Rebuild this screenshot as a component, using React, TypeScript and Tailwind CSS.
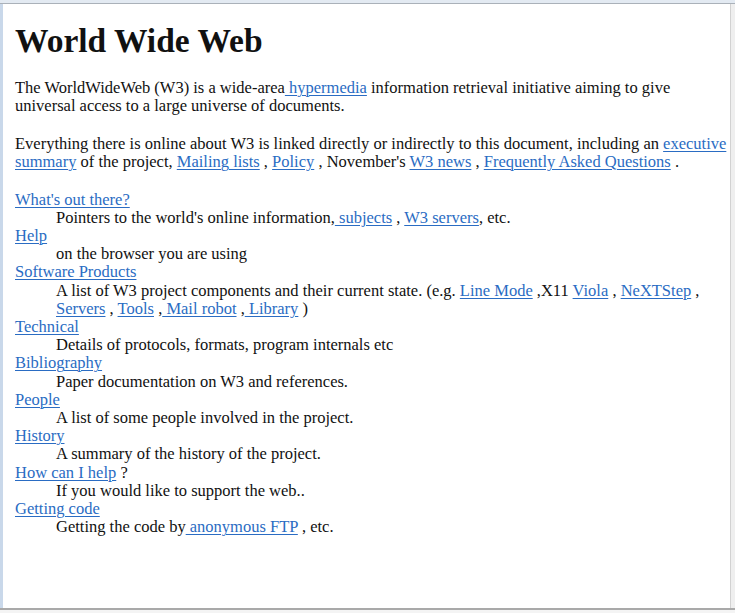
const link = "text-[#2a6cc3] underline decoration-1 underline-offset-[2px]";

function A({ children }: { children: React.ReactNode }) {
  return <a href="#" className={link}>{children}</a>;
}

const entries: { term: React.ReactNode; desc: React.ReactNode }[] = [
  {
    term: <A>What's out there?</A>,
    desc: (
      <>
        Pointers to the world's online information,<A> subjects</A> , <A>W3 servers</A>, etc.
      </>
    ),
  },
  { term: <A>Help</A>, desc: "on the browser you are using" },
  {
    term: <A>Software Products</A>,
    desc: (
      <>
        A list of W3 project components and their current state. (e.g. <A>Line Mode</A> ,X11{" "}
        <A>Viola</A> , <A>NeXTStep</A> , <A>Servers</A> , <A>Tools</A> ,<A> Mail robot</A> ,
        <A> Library</A> )
      </>
    ),
  },
  { term: <A>Technical</A>, desc: "Details of protocols, formats, program internals etc" },
  { term: <A>Bibliography</A>, desc: "Paper documentation on W3 and references." },
  { term: <A>People</A>, desc: "A list of some people involved in the project." },
  { term: <A>History</A>, desc: "A summary of the history of the project." },
  {
    term: (
      <>
        <A>How can I help</A> ?
      </>
    ),
    desc: "If you would like to support the web..",
  },
  {
    term: <A>Getting code</A>,
    desc: (
      <>
        Getting the code by<A> anonymous FTP</A> , etc.
      </>
    ),
  },
];

export default function App() {
  return (
    <div className="w-[735px] h-[613px] bg-white overflow-hidden flex flex-col">
      <div className="h-[3px] bg-[#e3eaf2]" />
      <div className="flex-1 flex border-t border-[#aab1b9] min-h-0">
        <div className="w-[3px] bg-[#c9d8ea]" />
        <div
          className="flex-1 bg-white text-[16.5px] leading-[18.2px] text-[#111] pl-[12px] pr-[2px] overflow-hidden"
          style={{ fontFamily: '"Liberation Serif", "Times New Roman", serif' }}
        >
          <h1 className="text-[33.5px] leading-[37px] font-bold mt-[18px] mb-[19.5px]">World Wide Web</h1>
          <p>
            The WorldWideWeb (W3) is a wide-area<A> hypermedia</A> information retrieval initiative aiming to
            give universal access to a large universe of documents.
          </p>
          <p className="mt-[19.6px]">
            Everything there is online about W3 is linked directly or indirectly to this document, including an{" "}
            <A>executive summary</A> of the project, <A>Mailing lists</A> , <A>Policy</A> , November's{" "}
            <A>W3 news</A> , <A>Frequently Asked Questions</A> .
          </p>
          <dl className="mt-[19.6px]">
            {entries.map((e, i) => (
              <div key={i}>
                <dt>{e.term}</dt>
                <dd className="ml-[41px]">{e.desc}</dd>
              </div>
            ))}
          </dl>
        </div>
        <div className="w-[5px] bg-[#efefef] border-l border-[#d2d2d2]" />
      </div>
      <div className="h-[2px] bg-[#a9a9a9]" />
      <div className="h-[3px] bg-[#f4f4f4]" />
    </div>
  );
}
